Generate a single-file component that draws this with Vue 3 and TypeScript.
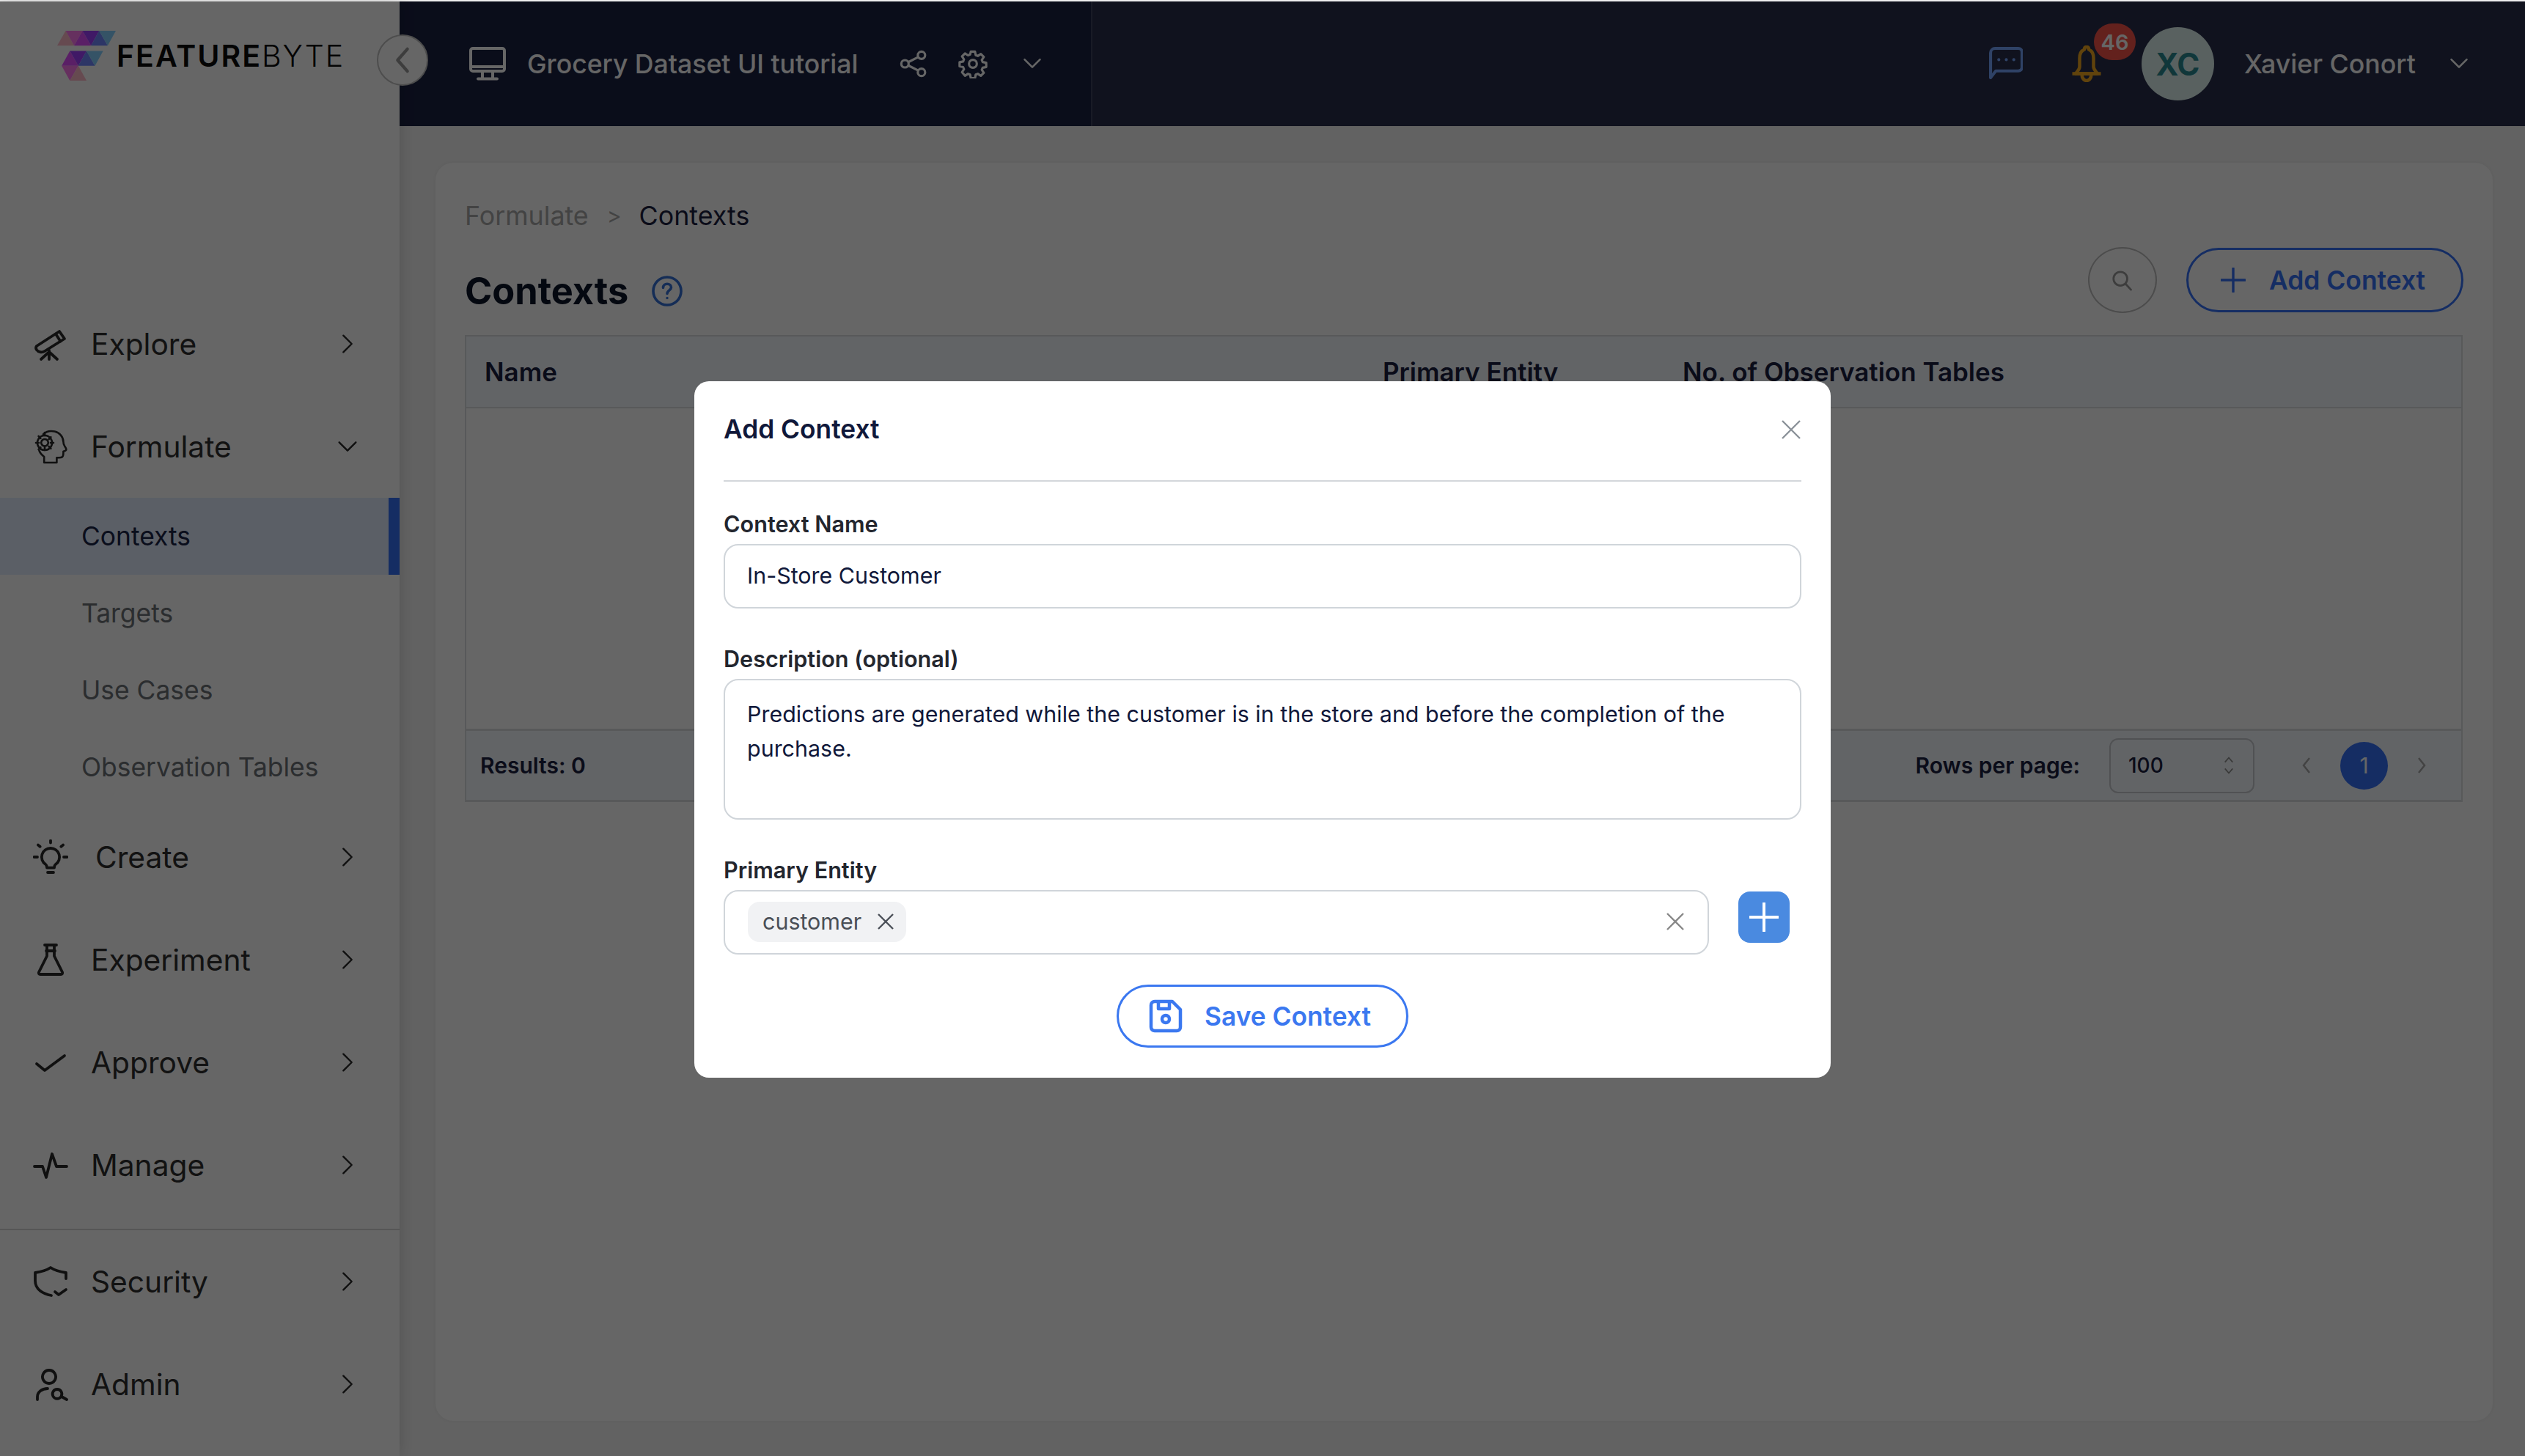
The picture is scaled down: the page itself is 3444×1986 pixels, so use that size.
<script setup lang="ts">
interface NavItem { label: string; icon: string[]; open?: boolean; wide?: boolean; thin?: boolean }

const telescope = ['M2.500 13.500 18 3.500l3.500 5-13.500 8.500c-2 1.200-4.500.6-5.600-1-.6-1-.3-2 .1-2.500Z', 'M15.500 5.300l3.200 5', 'M11 16.500V22.500M11 17.500l-5.500 5M11 17.500l5.500 5']
const head = ['M7 3.600C9 1.800 12 1.200 14.800 1.800c3.400.8 5.800 3.600 5.900 7 0 1.200.2 2 .9 3 .5.8 1.400 1.800 1 2.600-.3.7-1.200.8-1.900 1 0 1.400.2 3-.8 3.800-1 .7-2.600.4-3.700.4v3.400H7.600v-4c-1.400-1-2.800-2.600-3.400-4.200', 'M8 4.500a5 5 0 1 1-.01 0Z', 'M8 7a2.400 2.400 0 1 1-.01 0Z', 'M8 2.500v2M8 12.500v2M2 9.500h2M12 9.500h2M3.800 5l1.400 1.400M10.800 12l1.400 1.400M3.800 14l1.400-1.400M10.800 7l1.400-1.400']
const bulb = ['M12 6a6 6 0 0 0-3.400 11c.8.6.9 1 .9 2.300h5c0-1.300.1-1.700.9-2.300A6 6 0 0 0 12 6Z', 'M10 22.500h4', 'M12 .8v1.500M3.500 3.800l1.300 1.100M20.500 3.800l-1.300 1.100M.8 12h2.200M21 12h2.200']
const flask = ['M8 2h8', 'M9.500 2v7.500L4 20.500c-.4.8.1 1.500 1 1.500h14c.9 0 1.400-.7 1-1.500L14.500 9.500V2', 'M9 6h6']
const check = ['M2.500 13 8 17.500 21.500 7.500']
const pulse = ['M1 13h5.500l2.500 7.500L13 4.500l3 8.500h7']
const shield = ['M12.500 21.500C7 20.500 1.500 17.500 1.500 11.500V6C5 5.500 9 4.500 12 2.500c3 2 7 3 10.500 3.500v4', 'M15 19l2.500 2 5-3.500']
const admin = ['M11 2.500a4.500 4.500 0 1 1-.01 0Z', 'M3 22.500v-2c0-3 3-5.500 7-5.500', 'M16.500 15.500a3.200 3.200 0 1 1-.01 0Z', 'M19.500 20.500l3.500 2']

const topNav: NavItem[] = [
  { label: 'Explore', icon: telescope },
  { label: 'Formulate', icon: head, open: true, thin: true },
]
const subNav = ['Contexts', 'Targets', 'Use Cases', 'Observation Tables']
const midNav: NavItem[] = [
  { label: 'Create', icon: bulb, wide: true },
  { label: 'Experiment', icon: flask },
  { label: 'Approve', icon: check },
  { label: 'Manage', icon: pulse },
]
const lowNav: NavItem[] = [
  { label: 'Security', icon: shield },
  { label: 'Admin', icon: admin },
]

const logoTriangles: { points: string; fill: string }[] = [
  { points: '203,186 233,126 263,186', fill: '#ffb9c8' },
  { points: '233,126 293,126 263,186', fill: '#ff78ee' },
  { points: '263,186 293,126 323,186', fill: '#e24eff' },
  { points: '293,126 352,126 323,186', fill: '#a040ff' },
  { points: '323,186 352,126 382,186', fill: '#7088ff' },
  { points: '352,126 411,126 382,186', fill: '#86d0ff' },
  { points: '219,268 248,208 278,268', fill: '#e24eff' },
  { points: '248,208 307,208 278,268', fill: '#a040ff' },
  { points: '278,268 307,208 337,268', fill: '#7088ff' },
  { points: '307,208 366,208 337,268', fill: '#86d0ff' },
  { points: '219,268 278,268 248,328', fill: '#ff78ee' },
  { points: '248,328 278,268 307,328', fill: '#ffb9c8' },
]
</script>

<template>
  <div class="root">
    <div class="top-strip"></div>
    <div class="shell">
      <aside class="sidebar">
        <div class="logo">
          <svg class="logo-mark" viewBox="203 126 208 202" preserveAspectRatio="none">
            <polygon v-for="t in logoTriangles" :key="t.points" :points="t.points" :fill="t.fill" />
          </svg>
          <span class="logo-text"><b>FEATURE</b>BYTE</span>
        </div>
        <nav class="nav">
          <div v-for="item in topNav" :key="item.label" class="nav-row">
            <svg class="nav-icon" :class="{ thin: item.thin }" viewBox="0 0 24 24"><path v-for="d in item.icon" :key="d" :d="d" /></svg>
            <span class="nav-label">{{ item.label }}</span>
            <svg class="nav-chev" viewBox="0 0 24 24">
              <path :d="item.open ? 'M4 8l8 8 8-8' : 'M8 4l8 8-8 8'" />
            </svg>
          </div>
          <div v-for="(s, i) in subNav" :key="s" class="sub-row" :class="{ active: i === 0 }">{{ s }}</div>
          <div v-for="item in midNav" :key="item.label" class="nav-row">
            <svg class="nav-icon" viewBox="0 0 24 24"><path v-for="d in item.icon" :key="d" :d="d" /></svg>
            <span class="nav-label" :class="{ wide: item.wide }">{{ item.label }}</span>
            <svg class="nav-chev" viewBox="0 0 24 24"><path d="M8 4l8 8-8 8" /></svg>
          </div>
          <div class="nav-divider"></div>
          <div v-for="item in lowNav" :key="item.label" class="nav-row">
            <svg class="nav-icon" viewBox="0 0 24 24"><path v-for="d in item.icon" :key="d" :d="d" /></svg>
            <span class="nav-label">{{ item.label }}</span>
            <svg class="nav-chev" viewBox="0 0 24 24"><path d="M8 4l8 8-8 8" /></svg>
          </div>
        </nav>
      </aside>

      <div class="main">
        <header class="topbar">
          <div class="tb-left">
            <svg class="tb-monitor" viewBox="0 0 50 46">
              <rect x="2" y="2" width="46" height="31" rx="3" />
              <path d="M2 27h46M18 34v9M32 34v9M12 43.500h26" />
            </svg>
            <span class="tb-title">Grocery Dataset UI tutorial</span>
            <svg class="tb-share" viewBox="0 0 24 24">
              <circle cx="18.500" cy="5" r="3" /><circle cx="5" cy="12" r="3" /><circle cx="18.500" cy="19" r="3" />
              <path d="M8 10.500l7.800-4M8 13.500l7.800 4" />
            </svg>
            <svg class="tb-gear" viewBox="0 0 24 24">
              <circle cx="12" cy="12" r="3.200" />
              <path d="M10.300 2h3.400l.6 2.900 1.700.7 2.500-1.600 2.400 2.400-1.600 2.500.7 1.700 2.900.6v3.400l-2.900.6-.7 1.700 1.600 2.500-2.400 2.400-2.500-1.600-1.700.7-.6 2.900h-3.400l-.6-2.900-1.700-.7-2.500 1.600L3.100 18.900l1.600-2.500-.7-1.700-2.900-.6v-3.400l2.900-.6.7-1.700-1.600-2.500L5.500 3.500 8 5.100l1.700-.7Z" />
            </svg>
            <svg class="tb-chev" viewBox="0 0 24 24"><path d="M3 7l9 9 9-9" /></svg>
          </div>
          <div class="tb-right">
            <svg class="tb-chat" viewBox="0 0 45 45">
              <path d="M2 41V8a6 6 0 0 1 6-6h31a5 5 0 0 1 5 5v20a5 5 0 0 1-5 5H9Z" />
              <circle cx="13" cy="17" r="2" class="dot" /><circle cx="23" cy="17" r="2" class="dot" /><circle cx="33" cy="17" r="2" class="dot" />
            </svg>
            <div class="bell-wrap">
              <svg class="tb-bell" viewBox="0 0 45 50">
                <path d="M22.500 2c2 0 3 1.500 3 3.500 5 2 6.500 6.500 6.500 12V29c0 4 3 6 5.500 9.500H7.500C10 35 13 33 13 29V17.500c0-5.500 1.500-10 6.500-12 0-2 1-3.500 3-3.500Z" />
                <path d="M3 38.500h39M16 39c0 12 13 12 13 0" />
              </svg>
              <span class="badge">46</span>
            </div>
            <div class="avatar">XC</div>
            <span class="user-name">Xavier Conort</span>
            <svg class="tb-chev user-chev" viewBox="0 0 24 24"><path d="M3 7l9 9 9-9" /></svg>
          </div>
        </header>

        <div class="content">
          <section class="card">
            <div class="crumbs">
              <span class="crumb-muted">Formulate</span>
              <span class="crumb-sep">&gt;</span>
              <span class="crumb-cur">Contexts</span>
            </div>
            <div class="title-row">
              <h1 class="page-title">Contexts</h1>
              <svg class="help" viewBox="0 0 42 42">
                <circle cx="21" cy="21" r="19" />
                <path d="M15.500 16.500c0-3.200 2.500-5.200 5.500-5.200s5.500 2 5.500 4.800c0 3.800-5.500 3.900-5.500 8.400" />
                <circle cx="21" cy="30.500" r="1.700" class="help-dot" />
              </svg>
              <div class="title-actions">
                <div class="search-btn">
                  <svg viewBox="0 0 24 24"><circle cx="10.500" cy="10.500" r="7.500" /><path d="M16 16l6 6.500" /></svg>
                </div>
                <div class="add-btn">
                  <svg viewBox="0 0 34 34"><path d="M17 1v32M1 17h32" /></svg>
                  <span>Add Context</span>
                </div>
              </div>
            </div>
            <div class="table">
              <div class="t-head">
                <span>Name</span><span>Primary Entity</span><span>No. of Observation Tables</span>
              </div>
              <div class="t-body"></div>
              <div class="t-foot">
                <span class="results">Results: 0</span>
                <span class="rows-label">Rows per page:</span>
                <div class="rows-select">
                  <span>100</span>
                  <svg viewBox="0 0 16 30"><path d="M2 10l6-7 6 7M2 20l6 7 6-7" /></svg>
                </div>
                <svg class="pg-chev" viewBox="0 0 14 24"><path d="M11 2 3 12l8 10" /></svg>
                <span class="pg-num">1</span>
                <svg class="pg-chev" viewBox="0 0 14 24"><path d="M3 2l8 10-8 10" /></svg>
              </div>
            </div>
          </section>
        </div>
      </div>
    </div>
    <div class="collapse-btn">
      <svg viewBox="0 0 24 40"><path d="M19 4 5 20l14 16" /></svg>
    </div>

    <div class="overlay">
      <div class="modal">
        <div class="modal-head">
          <span class="modal-title">Add Context</span>
          <svg class="modal-x" viewBox="0 0 26 26"><path d="M1 1l24 24M25 1 1 25" /></svg>
        </div>
        <div class="modal-body">
          <label class="f-label f-first">Context Name</label>
          <div class="input">In-Store Customer</div>
          <label class="f-label">Description (optional)</label>
          <div class="input textarea">Predictions are generated while the customer is in the store and before the completion of the purchase.</div>
          <label class="f-label">Primary Entity</label>
          <div class="entity-row">
            <div class="input entity">
              <span class="tag">customer
                <svg viewBox="0 0 22 22"><path d="M1 1l20 20M21 1 1 21" /></svg>
              </span>
              <svg class="entity-x" viewBox="0 0 24 24"><path d="M1 1l22 22M23 1 1 23" /></svg>
            </div>
            <div class="plus-btn">
              <svg viewBox="0 0 40 40"><path d="M20 1v38M1 20h38" /></svg>
            </div>
          </div>
          <div class="save-wrap">
            <div class="save-btn">
              <svg viewBox="0 0 46 46">
                <path d="M3 8a5 5 0 0 1 5-5h24l11 11v24a5 5 0 0 1-5 5H8a5 5 0 0 1-5-5Z" />
                <path d="M13 3v10h15V3" />
                <circle cx="23" cy="27" r="5" />
              </svg>
              <span>Save Context</span>
            </div>
          </div>
        </div>
      </div>
    </div>
  </div>
</template>

<style>
html, body { margin: 0; padding: 0; background: #fff; }
</style>

<style scoped>
.root {
  width: 3444px;
  height: 1986px;
  overflow: hidden;
  position: relative;
  font-family: Inter, "Liberation Sans", sans-serif;
  background: #f5f5f5;
}
.top-strip { height: 2px; background: #eeeeee; }
.shell { display: flex; height: 1984px; }

.sidebar {
  width: 545px;
  flex: none;
  background: #fff;
  box-shadow: 0 0 20px rgba(0, 0, 0, .16);
  position: relative;
  z-index: 2;
}
.logo { height: 397px; display: flex; align-items: flex-start; padding: 40px 0 0 78px; box-sizing: border-box; }
.logo-mark { width: 80px; height: 68px; flex: none; }
.logo-text { font-size: 41px; font-weight: 300; letter-spacing: 2px; color: #0c0c0c; margin: 9px 0 0 1px; line-height: 50px; white-space: nowrap; }
.logo-text b { font-weight: 600; }

.nav-row { height: 140px; display: flex; align-items: center; padding-left: 45px; box-sizing: border-box; }
.nav-icon { width: 48px; height: 48px; flex: none; fill: none; stroke: #2a2a2a; stroke-width: 1.900; stroke-linecap: round; stroke-linejoin: round; }
.nav-icon.thin { stroke-width: 1.300; }
.nav-label { font-size: 40.700px; color: #2e2e2e; margin-left: 31px; width: 333px; }
.nav-label.wide { margin-left: 37px; width: 327px; }
.nav-chev { width: 34px; height: 34px; flex: none; fill: none; stroke: #2a2a2a; stroke-width: 1.700; stroke-linecap: round; stroke-linejoin: round; }
.sub-row { height: 105px; display: flex; align-items: center; padding-left: 111px; font-size: 35.400px; color: #6b7075; box-sizing: border-box; }
.sub-row.active { color: #1a2348; background: #e3edff; border-right: 15px solid #3672f8; }
.nav-divider { height: 2px; background: #d8d8d8; margin-top: 17px; }

.main { flex: 1; min-width: 0; display: flex; flex-direction: column; }
.topbar { height: 170px; flex: none; display: flex; background: #282f4d; }
.tb-left { width: 945px; flex: none; background: #1a2142; border-right: 2px solid #3f4560; box-sizing: border-box; display: flex; align-items: center; padding-left: 95px; }
.tb-monitor { width: 50px; height: 46px; fill: none; stroke: #fff; stroke-width: 4; flex: none; stroke-linecap: round; }
.tb-title { font-size: 35.600px; font-weight: 500; color: #fff; margin-left: 29px; width: 507px; white-space: nowrap; }
.tb-share, .tb-gear { width: 40px; height: 40px; flex: none; fill: none; stroke: #fff; stroke-width: 1.900; }
.tb-gear { margin-left: 41px; stroke-linejoin: round; }
.tb-chev { width: 28px; height: 28px; flex: none; fill: none; stroke: #fff; stroke-width: 2.200; stroke-linecap: round; stroke-linejoin: round; }
.tb-left .tb-chev { margin-left: 47px; }
.tb-right { flex: 1; display: flex; align-items: center; justify-content: flex-end; padding-right: 76px; }
.tb-chat { width: 46px; height: 46px; fill: none; stroke: #76a6ff; stroke-width: 4; stroke-linejoin: round; flex: none; }
.tb-chat .dot { fill: #76a6ff; stroke: none; }
.bell-wrap { position: relative; width: 46px; height: 50px; margin-left: 64px; flex: none; }
.tb-bell { width: 46px; height: 50px; fill: none; stroke: #f2a91f; stroke-width: 4.500; stroke-linejoin: round; display: block; }
.badge {
  position: absolute; left: 33px; top: -30px;
  width: 57px; height: 50px; border-radius: 25px;
  background: #f7534a; color: #fff; font-size: 29px; font-weight: 600;
  display: flex; align-items: center; justify-content: center;
}
.avatar {
  width: 99px; height: 100px; border-radius: 50%; flex: none; margin-left: 52px;
  background: #dff3ef; color: #2a8a92; font-size: 42px; font-weight: 700;
  display: flex; align-items: center; justify-content: center;
}
.user-name { font-size: 35.700px; font-weight: 500; color: #fff; margin-left: 41px; width: 279px; white-space: nowrap; }

.content { flex: 1; min-height: 0; padding: 50px 44px 48px 49px; display: flex; }
.card { flex: 1; background: #fff; border-radius: 24px; padding: 50px 41px 0 40px; box-shadow: 0 0 6px rgba(0,0,0,.05); box-sizing: border-box; }

.crumbs { height: 44px; display: flex; align-items: center; font-size: 35.800px; margin-bottom: 21px; }
.crumb-muted { color: #a8a8a8; }
.crumb-sep { color: #a8a8a8; font-size: 30px; margin: 0 24px 0 25px; }
.crumb-cur { color: #1b2040; font-weight: 400; }

.title-row { height: 120px; display: flex; align-items: flex-start; }
.page-title { font-size: 50.500px; font-weight: 700; color: #0c1428; margin: 28px 0 0 0; line-height: 64px; }
.help { width: 42px; height: 42px; flex: none; margin: 39px 0 0 32px; fill: none; stroke: #3672d8; stroke-width: 3.600; stroke-linecap: round; }
.help-dot { fill: #3672d8; stroke: none; }
.title-actions { margin-left: auto; display: flex; align-items: center; gap: 40px; margin-right: -1px; }
.search-btn { width: 94px; height: 90px; border-radius: 50%; border: 2px solid #bdbdbd; box-sizing: border-box; display: flex; align-items: center; justify-content: center; }
.search-btn svg { width: 30px; height: 30px; fill: none; stroke: #999; stroke-width: 2.200; stroke-linecap: round; margin-left: -2px; }
.add-btn {
  width: 378px; height: 88px; border-radius: 44px; border: 3px solid #3672f8; box-sizing: border-box;
  display: flex; align-items: center; padding-left: 44px; color: #3672f8; font-size: 35.400px; font-weight: 600;
}
.add-btn svg { width: 34px; height: 34px; fill: none; stroke: #3672f8; stroke-width: 3.400; stroke-linecap: round; margin-right: 32px; }

.table { border: 2px solid #dcdfe2; border-bottom-width: 3px; }
.t-head { height: 96px; background: #f5faff; border-bottom: 2px solid #dcdfe2; display: grid; grid-template-columns: 1225px 409px 1fr; padding-left: 25px; align-items: center; font-size: 35px; font-weight: 600; color: #1a2040; box-sizing: content-box; }
.t-body { height: 437px; }
.t-foot { height: 94px; background: #f5faff; border-top: 3px solid #dcdfe2; display: flex; align-items: center; padding-left: 19px; color: #1a2040; font-size: 30px; font-weight: 600; }
.results { font-weight: 600; }
.rows-label { margin-left: auto; }
.rows-select { width: 198px; height: 75px; border: 2px solid #c8cbd0; border-radius: 12px; box-sizing: border-box; margin-left: 40px; display: flex; align-items: center; justify-content: space-between; padding: 0 26px 0 24px; font-size: 28px; font-weight: 500; }
.rows-select svg { width: 14px; height: 28px; fill: none; stroke: #909090; stroke-width: 2; }
.pg-chev { width: 14px; height: 24px; fill: none; stroke: #a8a8a8; stroke-width: 2.500; margin-left: 64px; flex: none; }
.pg-num { width: 65px; height: 65px; border-radius: 50%; background: #3672f8; color: #fff; font-weight: 400; font-size: 30px; display: flex; align-items: center; justify-content: center; margin-left: 39px; flex: none; }
.pg-num + .pg-chev { margin-left: 39px; margin-right: 47px; }

.collapse-btn {
  position: absolute; left: 514px; top: 47px; width: 70px; height: 70px; border-radius: 50%;
  background: #fff; border: 2px solid #c0c0c0; box-sizing: border-box; z-index: 3;
  display: flex; align-items: center; justify-content: center;
}
.collapse-btn svg { width: 26px; height: 38px; fill: none; stroke: #9a9a9a; stroke-width: 4.500; stroke-linecap: round; stroke-linejoin: round; }

.overlay {
  position: absolute; left: 0; right: 0; top: 2px; bottom: 0; z-index: 10;
  background: rgba(0, 0, 0, .6);
  display: flex; justify-content: center; align-items: flex-start; padding-top: 518px; box-sizing: border-box;
}
.modal { width: 1550px; height: 950px; background: #fff; border-radius: 20px; padding: 0 40px; box-sizing: border-box; }
.modal-head { height: 137px; border-bottom: 2px solid #d3d7db; display: flex; align-items: center; justify-content: space-between; padding-bottom: 4px; box-sizing: border-box; }
.modal-title { font-size: 35.300px; font-weight: 600; color: #10183a; }
.modal-x { width: 26px; height: 26px; fill: none; stroke: #8b9299; stroke-width: 2.400; margin-right: 1px; }

.f-label { display: block; font-size: 30.600px; font-weight: 600; color: #23262e; line-height: 38px; margin: 50px 0 8px; }
.f-label.f-first { margin-top: 39px; }
.input { height: 88px; border: 2px solid #d0d5da; border-radius: 20px; box-sizing: border-box; display: flex; align-items: center; padding: 0 30px 2px; font-size: 30.450px; color: #10183a; }
.textarea { display: block; height: 192px; padding: 23px 30px; line-height: 47px; }
.entity-row { display: flex; align-items: flex-start; }
.entity { width: 1344px; flex: none; padding: 0 30px 2px; justify-content: space-between; }
.tag { height: 55px; width: 216px; box-sizing: border-box; border-radius: 16px; background: #f1f2f4; display: flex; align-items: center; justify-content: space-between; padding: 0 17px 0 20px; font-size: 30.450px; color: #4a4f57; margin-left: 1px; }
.tag svg { width: 22px; height: 22px; fill: none; stroke: #4a4f57; stroke-width: 2.400; }
.entity-x { width: 24px; height: 24px; fill: none; stroke: #888; stroke-width: 2.400; margin-right: 2px; }
.plus-btn { width: 70px; height: 70px; border-radius: 16px; background: #4a8ae0; margin: 2px 0 0 40px; display: flex; align-items: center; justify-content: center; }
.plus-btn svg { width: 40px; height: 40px; fill: none; stroke: #fff; stroke-width: 4; stroke-linecap: round; }
.save-wrap { display: flex; justify-content: center; margin: 41px 0 0 0; }
.save-btn {
  width: 398px; height: 86px; border-radius: 43px; border: 3px solid #3b78f0; box-sizing: border-box;
  display: flex; align-items: center; padding-left: 41px; color: #3b78f0; font-size: 35.300px; font-weight: 600; white-space: nowrap;
}
.save-btn svg { width: 46px; height: 46px; fill: none; stroke: #3b78f0; stroke-width: 4.500; stroke-linejoin: round; margin-right: 30px; flex: none; }
</style>
